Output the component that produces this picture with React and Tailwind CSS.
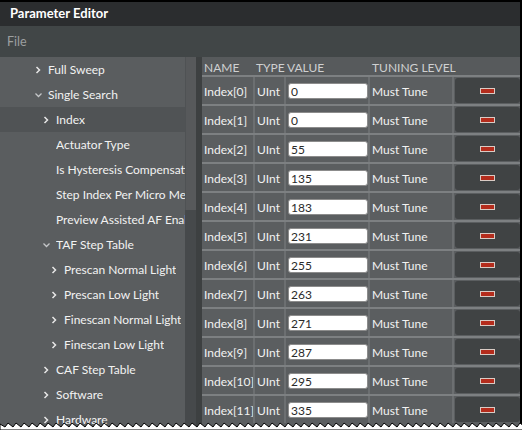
import React from 'react';

const tree = [
  { label: 'Full Sweep', level: 1, icon: 'right' },
  { label: 'Single Search', level: 1, icon: 'down' },
  { label: 'Index', level: 2, icon: 'right', selected: true },
  { label: 'Actuator Type', level: 2 },
  { label: 'Is Hysteresis Compensation Enabled', level: 2 },
  { label: 'Step Index Per Micro Meter', level: 2 },
  { label: 'Preview Assisted AF Enabled', level: 2 },
  { label: 'TAF Step Table', level: 2, icon: 'down' },
  { label: 'Prescan Normal Light', level: 3, icon: 'right' },
  { label: 'Prescan Low Light', level: 3, icon: 'right' },
  { label: 'Finescan Normal Light', level: 3, icon: 'right' },
  { label: 'Finescan Low Light', level: 3, icon: 'right' },
  { label: 'CAF Step Table', level: 2, icon: 'right' },
  { label: 'Software', level: 2, icon: 'right' },
  { label: 'Hardware', level: 2, icon: 'right' },
];

const values = [0, 0, 55, 135, 183, 231, 255, 263, 271, 287, 295, 335];

const indent = { 1: 'pl-[34px]', 2: 'pl-[42px]', 3: 'pl-[50px]' };

function Chevron({ dir }) {
  if (dir === 'down') {
    return (
      <svg width="9" height="6" viewBox="0 0 9 6" className="shrink-0">
        <path d="M1.5 1.5 L4.5 4.5 L7.5 1.5" fill="none" stroke="#c4c6c8" strokeWidth="1.3" />
      </svg>
    );
  }
  return (
    <svg width="9" height="8" viewBox="0 0 9 8" className="shrink-0">
      <path d="M2.5 1 L5.5 4 L2.5 7" fill="none" stroke="#e6e6e6" strokeWidth="1.5" />
    </svg>
  );
}

function TreeRow({ item }) {
  return (
    <div
      className={`flex h-[25px] items-center overflow-hidden whitespace-nowrap ${indent[item.level]} ${
        item.selected ? 'bg-[#505355]' : ''
      }`}
    >
      <div className="flex w-[14px] shrink-0 items-center">{item.icon && <Chevron dir={item.icon} />}</div>
      <span className="min-w-0 overflow-hidden pt-[1px] text-[12px] text-[#f2f2f2]">{item.label}</span>
    </div>
  );
}

function MinusButton() {
  return (
    <div className="flex h-[25px] w-[65px] items-center justify-center rounded-[3px] bg-[#404344]">
      <div className="h-[6px] w-[15px] border border-[#d9cbc4] bg-[#b42c1c]" />
    </div>
  );
}

export default function App() {
  return (
    <div
      className="relative h-[430px] w-[522px] overflow-hidden bg-black pt-[2px] pr-[2px]"
      style={{ fontFamily: 'Lato, "Noto Sans", sans-serif' }}
    >
      <div className="flex h-full flex-col">
        {/* title bar */}
        <div className="flex h-[24px] shrink-0 items-center bg-[#2b2d2f] pl-[10px]">
          <span className="text-[13px] font-bold text-white">Parameter Editor</span>
        </div>

        {/* menu */}
        <div className="flex h-[31px] shrink-0 items-center bg-[#414647] pl-[7px]">
          <span className="pt-[2px] text-[12.5px] text-[#9c9fa0]">File</span>
        </div>

        <div className="flex min-h-0 flex-1">
          {/* tree */}
          <div className="w-[185px] shrink-0 overflow-hidden bg-[#5a5d5f]">
            {tree.map((item) => (
              <TreeRow key={item.label} item={item} />
            ))}
          </div>

          {/* scrollbar */}
          <div className="flex w-[11px] shrink-0 flex-col bg-[#46494b]">
            <div className="h-[153px] border-l border-[#4f5254] bg-[#57595b]" />
          </div>
          <div className="w-[6px] shrink-0 bg-[#3d4041]" />

          {/* table */}
          <div className="flex-1 bg-[#5b5e60] text-[12px] text-[#f2f2f2]">
            <div className="grid h-[18px] grid-cols-[51px_31px_84px_84px_68px] items-center whitespace-nowrap bg-[#575a5c] pt-[2px] text-[#cfd0d1]">
              <span className="pl-[2px]">NAME</span>
              <span className="pl-[3px]">TYPE</span>
              <span className="pl-[3px]">VALUE</span>
              <span className="pl-[4px]">TUNING LEVEL</span>
              <span />
            </div>
            {values.map((v, i) => (
              <div
                key={i}
                className="grid h-[29px] grid-cols-[51px_31px_84px_84px_68px] border-t-2 border-[#7d8082]"
              >
                <div className="flex items-center whitespace-nowrap pl-[2px] pt-[2px]">Index[{i}]</div>
                <div className="flex items-center border-l-2 border-[#6c6f71] pl-[2px] pt-[2px]">UInt</div>
                <div className="flex items-center border-l-2 border-[#6c6f71] pl-[2px] pt-[1px]">
                  <div className="flex h-[16px] w-[80px] items-center rounded-[3px] border border-[#8c8c8c] bg-white pl-[2px] pt-[1px] text-[#2a2a2a]">
                    {v}
                  </div>
                </div>
                <div className="flex items-center whitespace-nowrap border-l-2 border-[#6c6f71] pl-[2px] pt-[2px]">Must Tune</div>
                <div className="flex items-center border-l-2 border-[#6c6f71] pl-[1px]">
                  <MinusButton />
                </div>
              </div>
            ))}
          </div>
        </div>
      </div>

      {/* torn bottom edge */}
      <svg className="absolute bottom-0 left-0" width="522" height="9" viewBox="0 0 522 9">
        <polygon
          fill="#ffffff"
          stroke="#000000"
          strokeWidth="1"
          points={
            '0,3 ' +
            Array.from({ length: 66 }, (_, k) => `${k * 8 + 5},6 ${k * 8 + 8},2`).join(' ') +
            ' 522,9 0,9'
          }
        />
      </svg>
    </div>
  );
}
